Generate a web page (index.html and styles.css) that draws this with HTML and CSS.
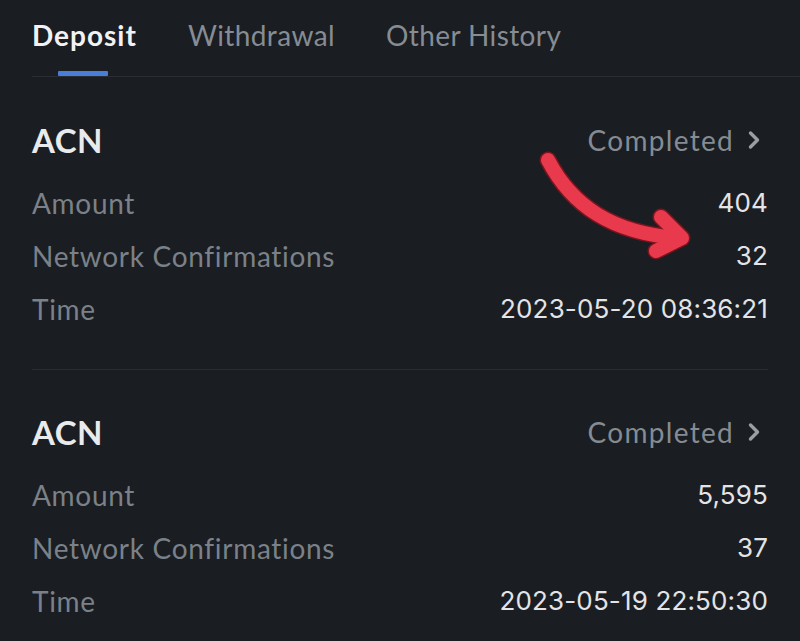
FILE: index.html
```html
<!DOCTYPE html>
<html lang="en">
<head>
<meta charset="utf-8">
<title>Deposit History</title>
<link rel="stylesheet" href="styles.css">
</head>
<body>
<div class="page">
  <nav class="tabs">
    <div class="tab active"><span class="tab-label">Deposit</span><span class="indicator"></span></div>
    <div class="tab"><span class="tab-label">Withdrawal</span></div>
    <div class="tab"><span class="tab-label">Other History</span></div>
  </nav>

  <section class="record">
    <div class="record-head">
      <span class="coin">ACN</span>
      <span class="status">Completed
        <svg class="chev" width="14" height="20" viewBox="0 0 14 20"><path d="M3.5 3 L10.5 10 L3.5 17" fill="none" stroke="currentColor" stroke-width="3.4" stroke-linecap="round" stroke-linejoin="round"/></svg>
      </span>
    </div>
    <div class="row"><span class="label">Amount</span><span class="value">404</span></div>
    <div class="row"><span class="label">Network Confirmations</span><span class="value">32</span></div>
    <div class="row"><span class="label">Time</span><span class="value">2023-05-20 08:36:21</span></div>
  </section>

  <section class="record">
    <div class="record-head">
      <span class="coin">ACN</span>
      <span class="status">Completed
        <svg class="chev" width="14" height="20" viewBox="0 0 14 20"><path d="M3.5 3 L10.5 10 L3.5 17" fill="none" stroke="currentColor" stroke-width="3.4" stroke-linecap="round" stroke-linejoin="round"/></svg>
      </span>
    </div>
    <div class="row"><span class="label">Amount</span><span class="value">5,595</span></div>
    <div class="row"><span class="label">Network Confirmations</span><span class="value">37</span></div>
    <div class="row"><span class="label">Time</span><span class="value">2023-05-19 22:50:30</span></div>
  </section>

  <svg class="annotation" width="800" height="641" viewBox="0 0 800 641">
    <g fill="none" stroke-linecap="round" stroke-linejoin="round">
      <path d="M548 160 C 572 206, 612 233, 678 238" stroke="#7a1520" stroke-width="17"/>
      <path d="M661 217 L682 238 L656 251" stroke="#7a1520" stroke-width="17"/>
      <path d="M548 160 C 572 206, 612 233, 678 238" stroke="#e83a4c" stroke-width="14"/>
      <path d="M661 217 L682 238 L656 251" stroke="#e83a4c" stroke-width="14"/>
    </g>
  </svg>
</div>
</body>
</html>
```

FILE: styles.css
```css
html, body {
  margin: 0;
  padding: 0;
  background: #1a1d21;
}

.page {
  position: relative;
  width: 800px;
  height: 641px;
  overflow: hidden;
  background: #1a1d21;
  font-family: "Lato", "Noto Sans", sans-serif;
}

.tabs {
  display: flex;
  gap: 51px;
  margin-left: 32px;
  height: 77px;
  border-bottom: 1px solid #2a2d32;
  box-sizing: border-box;
}

.tab {
  display: flex;
  flex-direction: column;
  align-items: center;
  padding-top: 15px;
}

.tab-label {
  font-size: 28px;
  line-height: 40px;
  color: #868c94;
  letter-spacing: 0.4px;
}

.tab.active .tab-label {
  color: #f2f2f4;
  font-weight: 700;
  letter-spacing: 1px;
}

.indicator {
  margin-top: auto;
  width: 50px;
  height: 5px;
  border-radius: 1px;
  background: #4a7ed6;
  margin-left: -3px;
}

.record {
  margin: 0 32px;
  padding: 43px 0 34px;
}

.record + .record {
  border-top: 1px solid #2a2d32;
  padding-top: 42px;
}

.record-head {
  display: flex;
  justify-content: space-between;
  align-items: center;
  height: 40px;
  margin-bottom: 16px;
}

.coin {
  font-size: 33px;
  font-weight: 700;
  color: #e9eaec;
  letter-spacing: 0.5px;
}

.status {
  display: flex;
  align-items: center;
  gap: 13px;
  font-size: 28px;
  color: #858b92;
  letter-spacing: 1.3px;
  margin-right: 7px;
}

.chev {
  color: #9a9fa6;
}

.row {
  display: flex;
  justify-content: space-between;
  align-items: center;
  height: 53px;
}

.label {
  font-size: 28px;
  color: #7b8189;
  letter-spacing: 0.7px;
}

.value {
  font-family: "Inter", "Roboto", sans-serif;
  font-size: 26px;
  color: #e3e4e7;
  letter-spacing: 0.15px;
}

.annotation {
  position: absolute;
  left: 0;
  top: 0;
  pointer-events: none;
}
```
